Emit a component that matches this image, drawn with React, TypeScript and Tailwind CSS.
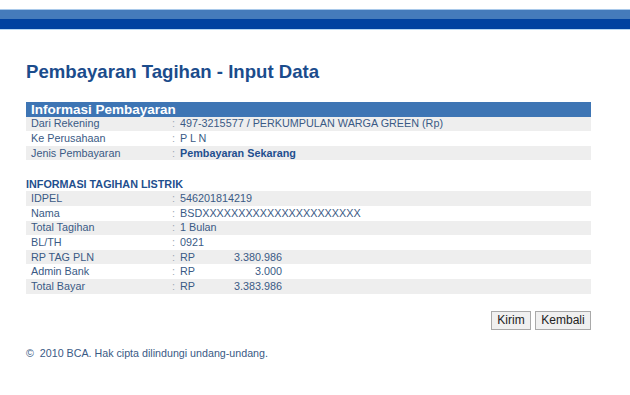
import React from "react";

const F = { fontFamily: '"Liberation Sans", Arial, sans-serif' };

function Row({ label, gray, children }: { label: string; gray?: boolean; children: React.ReactNode }) {
  return (
    <div className={`flex h-[14.6px] items-center text-[10.8px] leading-none text-[#3a5a85] ${gray ? "bg-[#eeeeee]" : "bg-white"}`}>
      <div className="w-[146px] pl-[5px]">{label}</div>
      <div className="w-[8px] text-[#a0a8b4]">:</div>
      <div className="flex-1">{children}</div>
    </div>
  );
}

function Amount({ v }: { v: string }) {
  return (
    <div className="flex">
      <span className="w-[24px]">RP</span>
      <span className="w-[78px] text-right">{v}</span>
    </div>
  );
}

export default function App() {
  return (
    <div style={F} className="w-[630px] h-[395px] bg-white overflow-hidden">
      <div className="h-[9px]" />
      <div className="h-[1px] bg-[#a9c9ea]" />
      <div className="h-[9px] bg-[#457bbb]" />
      <div className="h-[10px] bg-[#0142a0]" />
      <div className="h-[1px] bg-[#b9d8f2]" />
      <div className="pl-[26px] pr-[39px]">
        <h1 className="mt-[33px] text-[18.6px] font-bold leading-none text-[#1b4c8c]">Pembayaran Tagihan - Input Data</h1>
        <div className="mt-[20px] h-[15px] bg-[#3e75b4] pl-[5px] text-[13.5px] font-bold leading-[15px] text-white">Informasi Pembayaran</div>
        <Row label="Dari Rekening" gray>497-3215577 / PERKUMPULAN WARGA GREEN (Rp)</Row>
        <Row label="Ke Perusahaan">P L N</Row>
        <Row label="Jenis Pembayaran" gray>
          <span className="font-bold text-[#1f4f8e]">Pembayaran Sekarang</span>
        </Row>
        <div className="mt-[17px] h-[14px] text-[10.8px] font-bold leading-[14px] text-[#1f4f8e]">INFORMASI TAGIHAN LISTRIK</div>
        <Row label="IDPEL" gray>546201814219</Row>
        <Row label="Nama">BSDXXXXXXXXXXXXXXXXXXXXXX</Row>
        <Row label="Total Tagihan" gray>1 Bulan</Row>
        <Row label="BL/TH">0921</Row>
        <Row label="RP TAG PLN" gray><Amount v="3.380.986" /></Row>
        <Row label="Admin Bank"><Amount v="3.000" /></Row>
        <Row label="Total Bayar" gray><Amount v="3.383.986" /></Row>
        <div className="mt-[17px] flex justify-end gap-[4px]">
          <button className="h-[19px] w-[40px] border border-[#a9a9a9] bg-[#f0f0f0] text-[12px] leading-none text-[#222]">Kirim</button>
          <button className="h-[19px] w-[56px] border border-[#a9a9a9] bg-[#f0f0f0] text-[12px] leading-none text-[#222]">Kembali</button>
        </div>
        <div className="mt-[18px] text-[10.7px] leading-none text-[#3a5a85]">©&nbsp; 2010 BCA. Hak cipta dilindungi undang-undang.</div>
      </div>
    </div>
  );
}
